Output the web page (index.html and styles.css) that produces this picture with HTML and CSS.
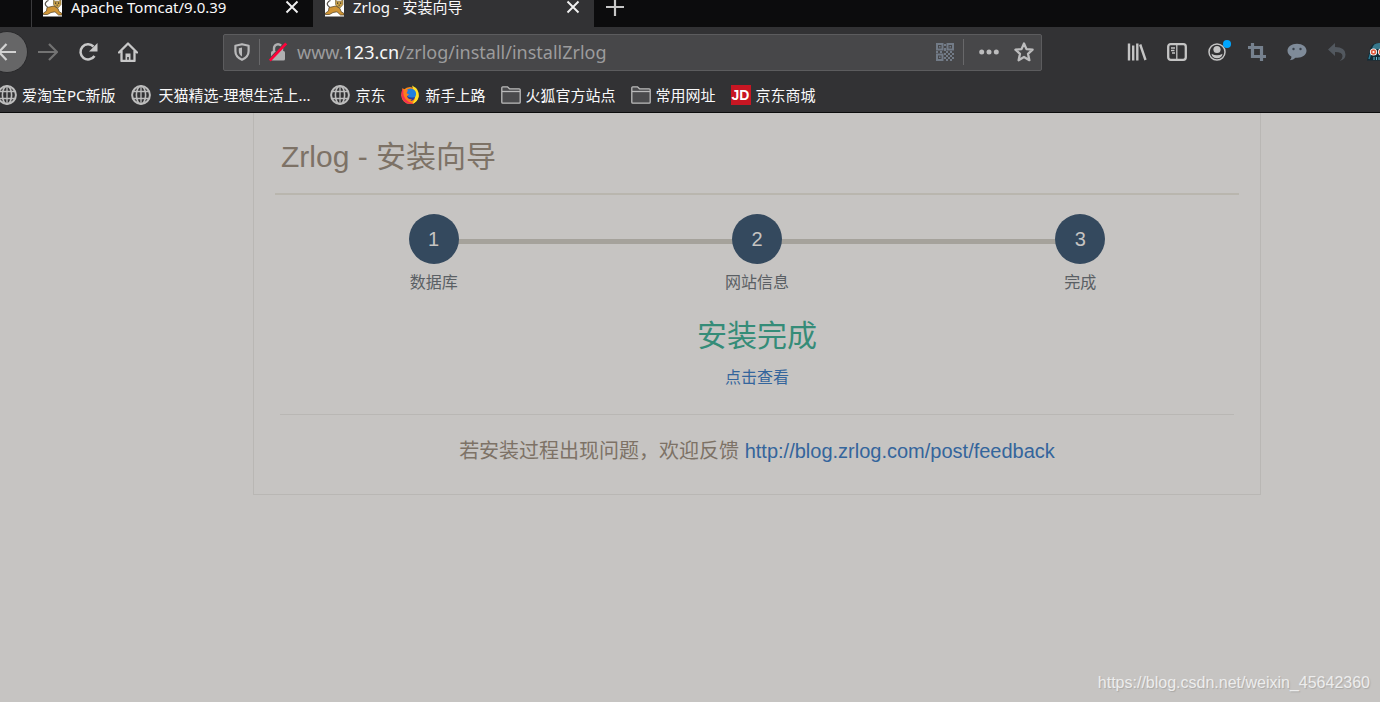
FILE: index.html
```html
<!DOCTYPE html>
<html lang="zh-CN">
<head>
<meta charset="utf-8">
<title>Zrlog - 安装向导</title>
<link rel="stylesheet" href="styles.css">
</head>
<body>
<svg class="defs" width="0" height="0" aria-hidden="true">
  <symbol id="globe" viewBox="0 0 20 20"><g fill="none" stroke="#bdbdbd" stroke-width="1.6"><circle cx="10" cy="10" r="8.9" stroke-width="2"/><ellipse cx="10" cy="10" rx="4.6" ry="8.9"/><path d="M10 1v18M2 6.5h16M2 13.5h16" stroke-width="1.3"/></g></symbol>
  <symbol id="folder" viewBox="0 0 20 18"><path d="M.8 16.200V1.800q0-1 1-1h4.700l2 2h9.700q1 0 1 1v12.400q0 1-1 1H1.800q-1 0-1-1z" fill="#4b4b4d" stroke="#bababa" stroke-width="1.300"/><path d="M1 5.500h18" stroke="#bababa" stroke-width="1.300"/></symbol>
  <symbol id="tomcat" viewBox="0 0 19 17"><path fill="#fff" d="M0 0h19v16.500H0z"/><path d="M4.500 7Q1.500 5 2.500 3t3-2.500" fill="none" stroke="#55514a" stroke-width="1.200"/><path d="M10.500 0l1.500 1.200h3.500L18 0v4.500l-2.500 3-3-.5-2-2.500z" fill="#c9a04a" stroke="#6b5a33" stroke-width=".6"/><path d="M4 7.500L11 6l4 2.500 1 3 3 2v1.500h-3.500L12 11.800l-4 .7-3.500 2H.3v-1.300L3.500 11z" fill="#cf9436" stroke="#4c3c20" stroke-width=".7"/><path fill="#2c2a25" d="M12 2.500h1.200v1.200H12zM15 2.500h1.200v1.200H15zM13.500 4.800h1.400v.8h-1.400z"/></symbol>
  <symbol id="close" viewBox="0 0 14 14"><path d="M1.500 1.500l11 11m0-11l-11 11" stroke="#f1f1f1" stroke-width="1.900" fill="none"/></symbol>
</svg>

<header class="browser">
  <div class="tabs">
    <div class="tab"><svg class="favicon"><use href="#tomcat"/></svg><span class="tab-title">Apache Tomcat/9.0.39</span><button class="plain" aria-label="关闭标签页"><svg class="icon-close"><use href="#close"/></svg></button></div>
    <div class="tab tab-active"><svg class="favicon"><use href="#tomcat"/></svg><span class="tab-title">Zrlog - 安装向导</span><button class="plain" aria-label="关闭标签页"><svg class="icon-close"><use href="#close"/></svg></button></div>
    <button class="plain new-tab" aria-label="新建标签页"><svg width="18" height="18" viewBox="0 0 18 18"><path d="M9 0v18M0 9h18" stroke="#c6c6c6" stroke-width="2.200"/></svg></button>
  </div>

  <div class="toolbar">
    <div class="nav">
      <button class="plain back" aria-label="后退"><svg width="20" height="20" viewBox="0 0 20 20"><path d="M19 10H2M9.500 2L2 10l7.500 8" fill="none" stroke="#d2d2d2" stroke-width="2.200"/></svg></button>
      <button class="plain" aria-label="前进"><svg width="20" height="20" viewBox="0 0 20 20"><path d="M0 10h18M11 2l8 8-8 8" fill="none" stroke="#737373" stroke-width="2.200"/></svg></button>
      <button class="plain" aria-label="刷新"><svg width="20" height="20" viewBox="0 0 20 20"><path d="M16.500 14A7.600 7.600 0 1 1 15.500 4.500" fill="none" stroke="#c8c8c8" stroke-width="2.500"/><path d="M19.500 1v8.500H11z" fill="#c8c8c8"/></svg></button>
      <button class="plain" aria-label="主页"><svg width="20" height="20" viewBox="0 0 20 20"><path d="M1 10.500l9-9 9 9M3.500 9v10h13V9" fill="none" stroke="#c8c8c8" stroke-width="2.300" stroke-linejoin="round" stroke-linecap="round"/><path d="M7.500 18v-6.500h5V18h-1.700v-3H9.200v3z" fill="#c8c8c8"/></svg></button>
    </div>
    <div class="urlbar">
      <svg width="16" height="18" viewBox="0 0 16 18"><path d="M8 1.200l6.600 1.600v5.400q0 5.500-6.600 8.600Q1.400 13.700 1.400 8.200V2.800z" fill="none" stroke="#b9b9ba" stroke-width="2.200" stroke-linejoin="round"/><path d="M8 4.500v9Q4.800 11.500 4.800 8V5.200z" fill="#b9b9ba"/></svg>
      <span class="divider"></span>
      <svg width="18" height="20" viewBox="0 0 18 20"><path d="M5 9V6.200a4 4 0 0 1 8 0V9" fill="none" stroke="#b0b0b1" stroke-width="2.400"/><rect x="2" y="9" width="14" height="9.500" rx="1.500" fill="#b0b0b1"/><path d="M0 17.500L16 .5" stroke="#48484a" stroke-width="1.500"/><path d="M.8 18.500L17.200 1.500" stroke="#ff0039" stroke-width="2.600"/></svg>
      <div class="address">www.<b>123.cn</b>/zrlog/install/installZrlog</div>
      <button class="plain" aria-label="二维码"><svg width="18" height="18" viewBox="0 0 18 18"><g fill="none" stroke="#727b87" stroke-width="2"><rect x="1" y="1" width="5.500" height="5.500"/><rect x="11.500" y="1" width="5.500" height="5.500"/><rect x="1" y="11.500" width="5.500" height="5.500"/></g><path fill="#727b87" d="M3 3h1.500v1.500H3zM13.500 3H15v1.500h-1.500zM3 13.500h1.500V15H3zM8 1h2v2H8zM8 5h2v3H8zM0 8h2v2H0zM4 8h2v2H4zM10 8h2v2h-2zM14 8h2v2h-2zM8 10h2v2H8zM12 10h2v2h-2zM16 10h2v2h-2zM10 12h2v2h-2zM14 12h2v2h-2zM8 14h2v2H8zM12 14h2v2h-2zM16 14h2v2h-2zM10 16h2v2h-2zM14 16h2v2h-2z"/></svg></button>
      <span class="divider divider-right"></span>
      <button class="plain dots" aria-label="页面操作"><svg width="20" height="6" viewBox="0 0 20 6"><g fill="#bcbcbd"><circle cx="2.700" cy="3" r="2.500"/><circle cx="10" cy="3" r="2.500"/><circle cx="17.300" cy="3" r="2.500"/></g></svg></button>
      <button class="plain" aria-label="收藏"><svg width="20" height="20" viewBox="0 0 20 20"><path d="M10 1.500l2.500 5.600 6.100.6-4.600 4.100 1.400 6.400-5.400-3.300-5.400 3.300L6 11.800 1.400 7.700l6.100-.6z" fill="none" stroke="#bcbcbd" stroke-width="2.300" stroke-linejoin="round"/></svg></button>
    </div>
    <div class="extensions">
      <button class="plain" aria-label="书库"><svg width="20" height="20" viewBox="0 0 20 20"><path d="M2 1.500v17M6.200 3.500v15M10.300 1.500v17M13.200 2.500l5.300 15.500" stroke="#c4c4c4" stroke-width="2.400" fill="none"/></svg></button>
      <button class="plain" aria-label="侧栏"><svg width="20" height="18" viewBox="0 0 20 18"><rect x="1.200" y="1.200" width="17.600" height="15.600" rx="2.500" fill="none" stroke="#c4c4c4" stroke-width="2.300"/><path d="M9.800 1v16M4 5h4M4 7.500h3.500M5 10h3" stroke="#c4c4c4" stroke-width="1.300"/></svg></button>
      <button class="plain account" aria-label="账户"><svg width="18" height="18" viewBox="0 0 18 18"><circle cx="9" cy="9" r="8" fill="none" stroke="#c4c4c4" stroke-width="1.500"/><circle cx="9" cy="6.500" r="3.600" fill="#c4c4c4"/><path d="M3.500 10.800q5.500 3 11 0Q14 15.200 9 15.200t-5.500-4.400z" fill="#c4c4c4"/></svg><span class="badge"></span></button>
      <button class="plain" aria-label="截图"><svg width="18" height="18" viewBox="0 0 18 18"><path d="M4.500 0v13.500H18M0 4.500h13.500V18" fill="none" stroke="#76818e" stroke-width="3.200"/></svg></button>
      <button class="plain" aria-label="消息"><svg width="20" height="18" viewBox="0 0 20 18"><path d="M10 .8c5.500 0 9.500 3 9.500 7s-4 7-9 7l-2-.1q-2 2.400-5.700 2.600 1.600-1.600 1.700-3.600Q.5 11.500.5 7.800C.5 3.800 4.500.8 10 .8z" fill="#7f8b99"/><circle cx="6.500" cy="6" r="1.200" fill="#38404a"/><circle cx="13.500" cy="6" r="1.200" fill="#38404a"/></svg></button>
      <button class="plain" aria-label="撤销"><svg width="18" height="18" viewBox="0 0 18 18"><path d="M0 6.500L7 0v4q10.500 0 10.500 7.500 0 5-6 6.500 3-2 3-4.800Q14.500 9 7 9v4z" fill="#52585f"/></svg></button>
      <button class="plain owl" aria-label="扩展"><svg width="20" height="20" viewBox="0 0 20 20"><path d="M0 18.500L3.500 6Q5 1 12 1t8 8v9.500z" fill="#102a36"/><path d="M5 7q1-6 7-6t8 6z" fill="#38788c"/><path d="M2 17l1.500-5" stroke="#2d7c95" stroke-width="1.500"/><circle cx="6.500" cy="10" r="3.600" fill="#fff"/><circle cx="14.500" cy="10" r="3.600" fill="#fff"/><circle cx="6.500" cy="10" r="2.700" fill="#e0583c"/><circle cx="14.500" cy="10" r="2.700" fill="#e0583c"/><circle cx="6.500" cy="10" r="1.100" fill="#fff"/><circle cx="14.500" cy="10" r="1.100" fill="#fff"/><path d="M7 15v3M9.500 15v3M12 15v3" stroke="#69b5cb"/></svg></button>
    </div>
  </div>

  <nav class="bookmarks">
    <a href="#"><svg class="bm-icon"><use href="#globe"/></svg>爱淘宝PC新版</a>
    <a href="#" class="bm-wide"><svg class="bm-icon"><use href="#globe"/></svg>天猫精选-理想生活上...</a>
    <a href="#"><svg class="bm-icon"><use href="#globe"/></svg>京东</a>
    <a href="#"><svg class="bm-icon" viewBox="0 0 20 20"><circle cx="10" cy="10.500" r="8.600" fill="#ff8a16"/><path d="M12 .5q7.500 3.500 6.800 11Q17.500 17.500 12 19q4.500-5 2.500-11z" fill="#ffe226"/><circle cx="10.500" cy="9" r="5.600" fill="#1f7fe0"/><path d="M6 9q2 5 9 3-1 4-5 4-5-1-5-6z" fill="#263c9c"/><path d="M2.500 3l2.500 2 3 .3-1.500 3 2.500 1-2 2q1 3.500 5 3-2 3.500-6 2.500-4.500-3-4.500-8z" fill="#ff7a1c"/><path d="M2.500 4Q-.5 12 4 16.500q4.500 4 10 1.500-5.500 0-8.500-4T3.500 6z" fill="#f5314f"/></svg>新手上路</a>
    <a href="#"><svg class="bm-icon"><use href="#folder"/></svg>火狐官方站点</a>
    <a href="#"><svg class="bm-icon"><use href="#folder"/></svg>常用网址</a>
    <a href="#"><span class="bm-icon jd">JD</span>京东商城</a>
  </nav>
</header>

<main class="page">
  <section class="card">
    <h1>Zrlog - 安装向导</h1>
    <ol class="steps">
      <li><span class="num">1</span>数据库</li>
      <li><span class="num">2</span>网站信息</li>
      <li><span class="num">3</span>完成</li>
    </ol>
    <div class="result">
      <h2>安装完成</h2>
      <a href="#">点击查看</a>
    </div>
    <p class="feedback">若安装过程出现问题，欢迎反馈 <a href="#">http://blog.zrlog.com/post/feedback</a></p>
  </section>
  <footer class="watermark">https://blog.csdn.net/weixin_45642360</footer>
</main>
</body>
</html>
```
FILE: styles.css
```css
* { box-sizing: border-box; }
body {
  margin: 0;
  min-height: 100vh;
  display: flex;
  flex-direction: column;
  overflow: hidden;
  background: #c6c4c2;
  font-family: "Liberation Sans", "Noto Sans CJK SC", sans-serif;
}
.defs { position: absolute; }
svg { display: block; flex: none; }
a { text-decoration: none; }
.plain {
  display: flex;
  align-items: center;
  justify-content: center;
  flex: none;
  padding: 0;
  border: 0;
  background: none;
}

.browser {
  background: #323234;
  border-bottom: 1px solid #0c0c0d;
  font-family: "Noto Sans", "Noto Sans CJK SC", sans-serif;
}
.tabs {
  display: flex;
  height: 27px;
  padding-left: 31px;
  background: #0c0c0d;
}
.tab {
  display: flex;
  align-items: flex-start;
  width: 282px;
  padding: 0 14px 0 11px;
  border-left: 1px solid #3b3b3d;
  color: #f9f9fa;
  font-size: 15px;
  line-height: 14px;
}
.tab-active { width: 281px; border-color: #323234; background: #323234; }
.tab-title { flex: 1; margin-left: 9px; white-space: nowrap; }
.favicon { width: 19px; height: 17px; }
.icon-close { width: 14px; height: 14px; }
.new-tab { height: 14px; margin-left: 12px; }

.toolbar {
  display: flex;
  align-items: center;
  height: 50px;
}
.nav { display: flex; align-items: center; width: 223px; gap: 20px; }
.back {
  width: 42px;
  height: 42px;
  margin: 0 -10px 0 -14px;
  border: 1px solid #29292b;
  border-radius: 50%;
  background: #666667;
}
.urlbar {
  display: flex;
  align-items: center;
  flex: 1;
  height: 37px;
  padding: 0 7px 0 10px;
  border: 1px solid #5c5c5e;
  border-radius: 2px;
  background: #474749;
}
.divider { width: 1px; height: 26px; margin: 0 9px; background: #68686a; }
.divider-right { margin: 0 15px 0 9px; }
.address {
  flex: 1;
  margin-left: 10px;
  color: #9c9c9d;
  font-size: 18px;
  line-height: 24px;
}
.address b { color: #f9f9fa; font-weight: 400; }
.dots { margin-right: 15px; }
.extensions {
  display: flex;
  align-items: center;
  width: 338px;
  padding-left: 75px;
}
.extensions .plain { width: 40px; height: 30px; }
.account { position: relative; }
.badge {
  position: absolute;
  top: 3px;
  right: 6px;
  width: 8px;
  height: 8px;
  border-radius: 50%;
  background: #00a6ff;
}

.bookmarks {
  display: flex;
  align-items: center;
  gap: 15px;
  height: 35px;
  margin-left: -3px;
}
.bookmarks a {
  display: flex;
  align-items: center;
  gap: 5px;
  color: #f9f9fa;
  font-size: 15px;
  line-height: 18px;
  white-space: nowrap;
}
.bookmarks .bm-wide { gap: 8px; margin-right: 5px; }
.bm-icon { width: 20px; height: 20px; }
.jd {
  background: #c81623;
  color: #fff;
  font: 700 14px/20px "Liberation Sans", sans-serif;
  text-align: center;
}

.page {
  flex: 1;
  display: flex;
  flex-direction: column;
  justify-content: space-between;
  padding: 0 119px 0 253px;
}
.card {
  padding: 0 18px;
  border: 1px solid #b9b7b4;
  border-top: 0;
}
h1 {
  margin: 0 3px;
  padding: 24px 6px 16px;
  border-bottom: 2px solid #b9b6ae;
  color: #7d7266;
  font-size: 30px;
  font-weight: 400;
  line-height: 40px;
}
.steps {
  display: grid;
  grid-template-columns: repeat(3, 1fr);
  margin: 0;
  padding: 19px 0 0;
  list-style: none;
}
.steps li {
  position: relative;
  display: flex;
  flex-direction: column;
  align-items: center;
  gap: 7px;
  color: #5a5f64;
  font-size: 16px;
  line-height: 24px;
}
.steps li + li::before {
  content: "";
  position: absolute;
  top: 25px;
  right: 50%;
  width: 100%;
  height: 5px;
  background: #a5a29b;
}
.steps li:nth-child(2) { z-index: 1; }
.steps li:nth-child(1) { z-index: 2; }
.num {
  position: relative;
  width: 50px;
  height: 50px;
  border-radius: 50%;
  background: #34495e;
  color: #c6c4c2;
  font-size: 20px;
  line-height: 50px;
  text-align: center;
}
.result {
  margin: 0 8px;
  padding: 20px 0 24px;
  border-bottom: 1px solid #b9b7b4;
  text-align: center;
  font-size: 16px;
  line-height: 24px;
}
h2 {
  margin: 0 0 9px;
  color: #358c78;
  font-size: 30px;
  font-weight: 400;
  line-height: 42px;
}
.card a { color: #34659c; }
.feedback {
  margin: 0;
  padding: 22px 0 29px;
  color: #7d7266;
  font-size: 20px;
  line-height: 28px;
  text-align: center;
}
.watermark {
  margin-right: -109px;
  padding-bottom: 9px;
  color: #ededed;
  font-size: 16px;
  line-height: 20px;
  text-align: right;
  text-shadow: 1px 1px 1px #aaa9a7;
}
```
